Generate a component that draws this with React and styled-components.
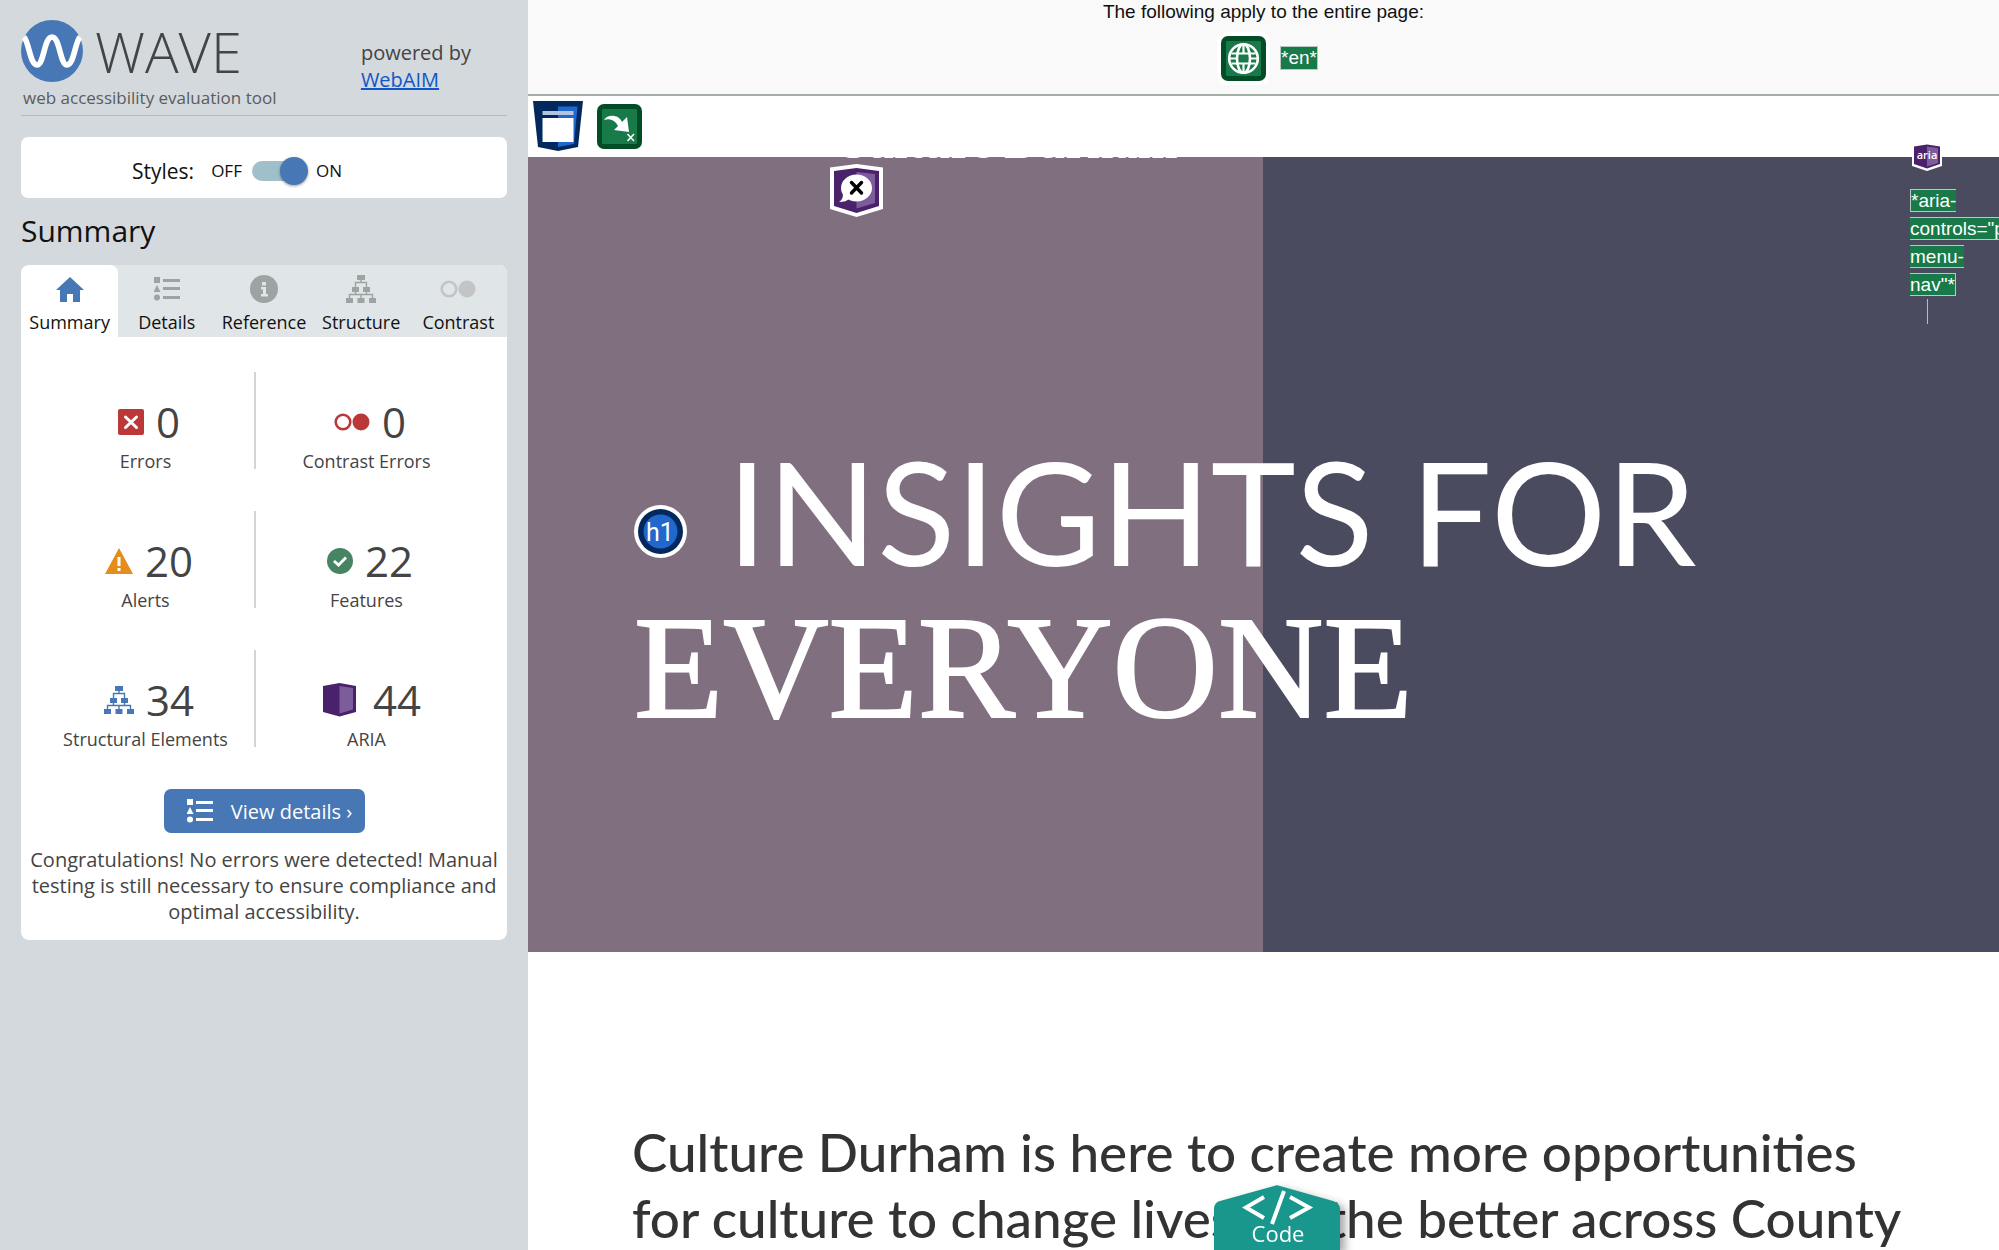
import React, { useState } from "react"
import styled, { createGlobalStyle } from "styled-components"

const GlobalStyle = createGlobalStyle`
  * {
    box-sizing: border-box;
  }
  body {
    margin: 0;
    font-family: "Open Sans", "Noto Sans", sans-serif;
    color: #444;
  }
  h1, h2, p {
    margin: 0;
    font-weight: 400;
  }
  svg {
    display: block;
    flex: none;
  }
  button {
    font-family: inherit;
    border: 0;
    padding: 0;
    cursor: pointer;
  }
`

const Page = styled.div`
  display: grid;
  grid-template-columns: 528px minmax(0, 1fr);
  height: 100vh;
  overflow: hidden;
`

/* sidebar */

const Sidebar = styled.aside`
  padding: 20px 21px;
  background: #d3d9dd;
`

const Brand = styled.header`
  display: flex;
  align-items: flex-start;
  justify-content: space-between;
  height: 96px;
  padding-right: 36px;
  border-bottom: 1px solid #b3b8bb;
`

const Logo = styled.div`
  display: flex;
  align-items: center;
  gap: 12px;
  height: 62px;
  font-size: 56px;
  font-weight: 300;
  line-height: 62px;
`

const Tagline = styled.p`
  padding-left: 2px;
  font-size: 17px;
  line-height: 32px;
  color: #5a5c5e;
`

const Powered = styled.p`
  padding-top: 19px;
  font-size: 20px;
  line-height: 27px;
  a {
    display: block;
    color: #0f57c9;
  }
`

const StylesCard = styled.div`
  display: flex;
  align-items: center;
  height: 61px;
  margin-top: 21px;
  padding: 6px 0 0 111px;
  border-radius: 7px;
  background: #fff;
  color: #111;
  font-size: 17px;
`

const StylesLabel = styled.span`
  margin-right: 17px;
  font-size: 21px;
`

const SwitchLabel = styled.label`
  display: flex;
  align-items: center;
  gap: 10px;
`

const Switch = styled.input`
  appearance: none;
  position: relative;
  width: 54px;
  height: 20px;
  margin: 0;
  border-radius: 10px;
  background: #9fc0cb;
  cursor: pointer;
  &::after {
    content: "";
    position: absolute;
    top: -4px;
    left: 0;
    width: 28px;
    height: 28px;
    border-radius: 50%;
    background: #4877b5;
    box-shadow: 0 1px 3px rgba(0, 0, 0, 0.4);
  }
  &:checked::after {
    left: 28px;
  }
`

const SectionTitle = styled.h2`
  margin-top: 12px;
  font-size: 30px;
  line-height: 42px;
  color: #111;
`

const Panel = styled.section`
  margin-top: 13px;
  padding-bottom: 15px;
  border-radius: 8px;
  background: #fff;
  overflow: hidden;
`

const Tabs = styled.div`
  display: grid;
  grid-template-columns: repeat(5, 1fr);
  background: #e0e5e7;
`

const Tab = styled.button`
  display: flex;
  flex-direction: column;
  align-items: center;
  height: 72px;
  padding-top: 5px;
  border-radius: 8px 8px 0 0;
  background: ${props => (props.$active ? "#fff" : "transparent")};
  color: #111;
  font-size: 18px;
  line-height: 28px;
`

const TabIcon = styled.span`
  display: flex;
  align-items: center;
  height: 38px;
  color: ${props => props.$color};
`

const Stats = styled.div`
  display: grid;
  grid-template-columns: repeat(2, 221px);
  row-gap: 42px;
  padding: 35px 0 42px 14px;
`

const Stat = styled.div`
  display: flex;
  flex-direction: column;
  align-items: center;
  height: 97px;
  padding: 23px 0 0 2px;
  border-right: 2px solid ${props => (props.$line ? "#d4d4d4" : "transparent")};
  font-size: 18px;
  line-height: 26px;
`

const Count = styled.div`
  display: flex;
  flex: none;
  align-items: center;
  gap: 12px;
  height: 53px;
  padding-left: 7px;
  font-size: 42px;
`

const DetailsButton = styled.button`
  display: flex;
  align-items: center;
  justify-content: center;
  gap: 18px;
  width: 201px;
  height: 44px;
  margin: 0 auto 14px;
  padding-left: 11px;
  border-radius: 7px;
  background: #4877b5;
  color: #fff;
  font-size: 20px;
`

const Message = styled.p`
  padding: 0 8px;
  font-size: 20px;
  line-height: 26px;
  text-align: center;
`

/* evaluated page */

const Main = styled.main`
  background: #fff;
  overflow: hidden;
`

const PageNote = styled.div`
  height: 96px;
  border-bottom: 2px solid #a5aea5;
  background: #f9f9f9;
  color: #111;
  font-family: "Liberation Sans", Arial, sans-serif;
  font-size: 19px;
  line-height: 24px;
  text-align: center;
`

const NoteIcons = styled.div`
  display: flex;
  align-items: center;
  justify-content: center;
  gap: 10px;
  height: 68px;
  padding-left: 8px;
`

const Attribute = styled.span`
  border: 1px solid #b9c9bf;
  background: #177a48;
  color: #fff;
  font-family: "Liberation Sans", Arial, sans-serif;
  font-size: 19px;
  line-height: 22px;
`

const TopStrip = styled.div`
  display: flex;
  align-items: center;
  gap: 14px;
  height: 61px;
  padding: 0 5px 1px;
`

const Hero = styled.section`
  position: relative;
  height: 795px;
  padding: 279px 0 0 106px;
  background: linear-gradient(90deg, #80707f 50%, #4b4b60 50%);
  color: #fff;
`

const SiteName = styled.a`
  position: absolute;
  top: -41px;
  left: 305px;
  color: #fff;
  font: bold 48px/52px "Liberation Serif", "Times New Roman", serif;
  text-decoration: none;
  white-space: nowrap;
`

const HiddenBadge = styled.span`
  position: absolute;
  top: 7px;
  left: 302px;
`

const MenuNote = styled.div`
  position: absolute;
  top: -14px;
  right: 0;
  width: 89px;
  line-height: 28px;
`

const AriaBadge = styled.div`
  margin-left: 2px;
`

const MenuAttribute = styled.div`
  margin-top: 16px;
`

const MenuBar = styled.div`
  width: 1px;
  height: 25px;
  margin-left: 17px;
  background: #bbb;
`

const Title = styled.h1`
  display: flex;
  flex-direction: column;
  white-space: nowrap;
`

const TitleLine = styled.span`
  display: flex;
  align-items: center;
  gap: 40px;
  height: 150px;
  font-family: Lato, sans-serif;
  font-size: 144px;
  line-height: 150px;
`

const HeadingMark = styled.span`
  padding-top: 40px;
`

const TitleSerif = styled.span`
  font-family: "Liberation Serif", "Times New Roman", serif;
  font-size: 146px;
  line-height: 164px;
  -webkit-text-stroke: 2px #fff;
`

const Intro = styled.p`
  padding: 167px 80px 0 104px;
  color: #333;
  font-family: Lato, sans-serif;
  font-size: 53px;
  font-weight: 500;
  line-height: 66px;
`

const CodeTab = styled.button`
  position: fixed;
  bottom: 0;
  left: 1214px;
  width: 126px;
  height: 65px;
  background: none;
  filter: drop-shadow(5px 4px 4px rgba(0, 0, 0, 0.35));
  color: #fff;
`

const WaveMark = () => (
  <svg width="62" height="62" viewBox="0 0 62 62">
    <circle cx="31" cy="31" r="31" fill="#4877b5" />
    <path d="M3 17C8 22 9 45 16 45S23 17 31 17s8 28 15 28S54 22 59 17" fill="none" stroke="#fff" strokeWidth="5.6" />
  </svg>
)

const HomeIcon = () => (
  <svg width="28" height="25" viewBox="0 0 28 25" fill="currentColor">
    <path d="M14 0L28 13h-4v12h-7v-8h-6v8H4V13H0z" />
  </svg>
)

const ListIcon = () => (
  <svg width="26" height="24" viewBox="0 0 26 24" fill="currentColor">
    <path d="M0 0h6v6H0zM3 8l3.5 7h-7zM9 2h17v3H9zM9 10h17v3H9zM9 19h17v3H9z" />
    <circle cx="3" cy="20.5" r="3" />
  </svg>
)

const InfoIcon = () => (
  <svg width="28" height="28" viewBox="0 0 28 28">
    <circle cx="14" cy="14" r="14" fill="currentColor" />
    <path d="M12 7h4v3.500h-4zM11 12h5v7h2v2.500h-7V19h2v-4.500h-2z" fill="#e0e5e7" />
  </svg>
)

const TreeIcon = () => (
  <svg width="30" height="28" viewBox="0 0 30 28" fill="currentColor">
    <path d="M11 0h8v5h-8zM6 12h7v5H6zM17 12h7v5h-7zM0 23h7v5H0zM11.500 23h7v5h-7zM23 23h7v5h-7z" />
    <path d="M15 4v4M9.500 13V7.500h11V13M9.500 16v4M20.500 16v4M3.500 24v-4.500h23V24M15 19v5" fill="none" stroke="currentColor" strokeWidth="1.4" />
  </svg>
)

const ContrastIcon = () => (
  <svg width="36" height="18" viewBox="0 0 36 18">
    <circle cx="9" cy="9" r="7.300" fill="none" stroke="currentColor" strokeWidth="2.600" />
    <circle cx="27" cy="9" r="8.500" fill="currentColor" />
  </svg>
)

const ErrorIcon = () => (
  <svg width="26" height="26" viewBox="0 0 26 26">
    <rect width="26" height="26" rx="2" fill="#bb3839" />
    <path d="M7.500 8l11 10.500M18.500 8l-11 10.500" stroke="#fff" strokeWidth="3" strokeLinecap="round" />
  </svg>
)

const AlertIcon = () => (
  <svg width="28" height="26" viewBox="0 0 28 26">
    <path d="M14 0l14 26H0z" fill="#e48d1b" />
    <path d="M12.500 9h3v9h-3zM12.500 20h3v3h-3z" fill="#fff" />
  </svg>
)

const FeatureIcon = () => (
  <svg width="26" height="26" viewBox="0 0 26 26">
    <circle cx="13" cy="13" r="13" fill="#478464" />
    <path d="M7 13l4.500 4L19 9.500" fill="none" stroke="#fff" strokeWidth="2.800" />
  </svg>
)

const AriaIcon = () => (
  <svg width="42" height="34" viewBox="-4 0 42 34">
    <path d="M0 3L16.500 0 33 3v26l-16.500 4.500L0 29z" fill="#4a216b" />
    <path d="M16.500 3L30 5v21.500l-13.500 4z" fill="#7c5c9b" />
  </svg>
)

const GlobeBadge = () => (
  <svg width="53" height="53" viewBox="0 0 53 53">
    <rect width="53" height="53" rx="9" fill="#fff" />
    <rect x="4" y="4" width="45" height="45" rx="7" fill="#034d26" />
    <rect x="9" y="9" width="35" height="35" rx="1" fill="#177a48" />
    <g fill="none" stroke="#fff" strokeWidth="2.600">
      <circle cx="26.500" cy="26.500" r="14.300" />
      <ellipse cx="26.500" cy="26.500" rx="6.500" ry="14.300" />
      <path d="M14.500 21.500h24M14.500 31.500h24M26.500 12v9.500M26.500 31.500V41M12 26.500h8M33 26.500h8" strokeWidth="2.200" />
    </g>
  </svg>
)

const HeaderBadge = () => (
  <svg width="50" height="50" viewBox="0 0 50 50">
    <path d="M0 0h50l-5 46-20 4-20-4z" fill="#03285d" />
    <path d="M25 5.500h19.500L41 43l-16 3z" fill="#2068cc" />
    <path d="M9.500 10h31v4h-31z" fill="#b3c4de" />
    <path d="M9.500 17h31v24h-31z" fill="#fff" />
  </svg>
)

const SkipBadge = () => (
  <svg width="45" height="45" viewBox="0 0 45 45">
    <rect width="45" height="45" rx="7" fill="#034d26" />
    <rect x="5" y="5" width="35" height="35" rx="1" fill="#177a48" />
    <path d="M7 16c3-6 15-6 18 2l5-5 2 15-15-2 4-4c-3-6-8-8-14-6z" fill="#fff" />
    <path d="M30.500 30l6.500 7M37 30l-6.500 7" stroke="#fff" strokeWidth="1.600" />
  </svg>
)

const SpeechBadge = () => (
  <svg width="53" height="53" viewBox="0 0 53 53">
    <path d="M0 3.500L26.500 0 53 3.500V45l-26.500 8L0 45z" fill="#fff" />
    <path d="M4 7l22.500-3L49 7v35l-22.500 7L4 42z" fill="#4a216b" />
    <path d="M26.500 8L45 10v29l-18.500 5.500z" fill="#7c5c9b" />
    <ellipse cx="26.500" cy="24" rx="15.500" ry="13.500" fill="#fff" />
    <path d="M13 29c0 5-1 7-4 9 5 0 8-1 11-4z" fill="#fff" />
    <path d="M21.500 18.500l10 10.500M31.500 18.500l-10 10.500" stroke="#000" strokeWidth="3.400" strokeLinecap="round" />
  </svg>
)

const AriaTextBadge = () => (
  <svg width="30" height="28" viewBox="0 0 30 28">
    <path d="M0 2L15 0l15 2v21l-15 5L0 23z" fill="#fff" />
    <path d="M2 3.500L15 1.500 28 3.500V21l-13 4.500L2 21z" fill="#4a216b" />
    <path d="M15 3.500L26 5v15l-11 3.500z" fill="#7c5c9b" />
    <text x="15" y="16" fill="#fff" fontFamily="Open Sans, sans-serif" fontSize="11" fontWeight="600" textAnchor="middle">aria</text>
  </svg>
)

const HeadingBadge = () => (
  <svg width="53" height="53" viewBox="0 0 53 53">
    <circle cx="26.500" cy="26.500" r="26.500" fill="#fff" />
    <circle cx="26.500" cy="26.500" r="22.500" fill="#03285d" />
    <circle cx="26.500" cy="26.500" r="17" fill="#2068cc" />
    <text x="26" y="36" fill="#fff" fontFamily="Roboto, sans-serif" fontSize="25" textAnchor="middle">h1</text>
  </svg>
)

const CodeShape = () => (
  <svg width="126" height="65" viewBox="0 0 126 65">
    <path d="M0 65V24c0-4 2-7 6-8L60 1c2-1 4-1 6 0l53 15c5 2 7 4 7 8v41z" fill="#19978d" />
    <g fill="none" stroke="#fff" strokeWidth="4">
      <path d="M50 12L32 22.500 50 33M76 12l19 10.500L76 33M70 6L58 39" />
    </g>
    <text x="64" y="57" fill="#fff" fontFamily="Open Sans, sans-serif" fontSize="22" textAnchor="middle">Code</text>
  </svg>
)

const tabs = [
  { name: "Summary", icon: <HomeIcon />, color: "#4877b5" },
  { name: "Details", icon: <ListIcon />, color: "#9da2a2" },
  { name: "Reference", icon: <InfoIcon />, color: "#9da2a2" },
  { name: "Structure", icon: <TreeIcon />, color: "#9da2a2" },
  { name: "Contrast", icon: <ContrastIcon />, color: "#c2c4c5" },
]

const stats = [
  { name: "Errors", count: 0, icon: <ErrorIcon /> },
  { name: "Contrast Errors", count: 0, icon: <ContrastIcon />, color: "#bb3839" },
  { name: "Alerts", count: 20, icon: <AlertIcon /> },
  { name: "Features", count: 22, icon: <FeatureIcon /> },
  { name: "Structural Elements", count: 34, icon: <TreeIcon />, color: "#4877b5" },
  { name: "ARIA", count: 44, icon: <AriaIcon /> },
]

const App = () => {
  const [stylesOn, setStylesOn] = useState(true)
  const [active, setActive] = useState("Summary")

  return (
    <Page>
      <GlobalStyle />
      <Sidebar>
        <Brand>
          <div>
            <Logo>
              <WaveMark />
              <span>WAVE</span>
            </Logo>
            <Tagline>web accessibility evaluation tool</Tagline>
          </div>
          <Powered>
            powered by <a href="#webaim">WebAIM</a>
          </Powered>
        </Brand>

        <StylesCard>
          <StylesLabel>Styles:</StylesLabel>
          <SwitchLabel>
            OFF
            <Switch
              type="checkbox"
              role="switch"
              checked={stylesOn}
              onChange={e => setStylesOn(e.target.checked)}
            />
            ON
          </SwitchLabel>
        </StylesCard>

        <SectionTitle>Summary</SectionTitle>
        <Panel>
          <Tabs role="tablist">
            {tabs.map(tab => (
              <Tab
                key={tab.name}
                role="tab"
                aria-selected={active === tab.name}
                $active={active === tab.name}
                onClick={() => setActive(tab.name)}
              >
                <TabIcon $color={tab.color}>{tab.icon}</TabIcon>
                {tab.name}
              </Tab>
            ))}
          </Tabs>
          <Stats>
            {stats.map((stat, i) => (
              <Stat key={stat.name} $line={i % 2 === 0}>
                <Count>
                  <TabIcon $color={stat.color}>{stat.icon}</TabIcon>
                  {stat.count}
                </Count>
                {stat.name}
              </Stat>
            ))}
          </Stats>
          <DetailsButton>
            <ListIcon />
            View details ›
          </DetailsButton>
          <Message>
            Congratulations! No errors were detected! Manual testing is still
            necessary to ensure compliance and optimal accessibility.
          </Message>
        </Panel>
      </Sidebar>

      <Main>
        <PageNote>
          <p>The following apply to the entire page:</p>
          <NoteIcons>
            <GlobeBadge />
            <Attribute>*en*</Attribute>
          </NoteIcons>
        </PageNote>
        <TopStrip>
          <HeaderBadge />
          <SkipBadge />
        </TopStrip>
        <Hero>
          <SiteName href="#home">Culture Durham</SiteName>
          <HiddenBadge>
            <SpeechBadge />
          </HiddenBadge>
          <MenuNote>
            <AriaBadge>
              <AriaTextBadge />
            </AriaBadge>
            <MenuAttribute>
              <Attribute>*aria-controls="primary-menu-nav"*</Attribute>
            </MenuAttribute>
            <MenuBar />
          </MenuNote>
          <Title>
            <TitleLine>
              <HeadingMark>
                <HeadingBadge />
              </HeadingMark>
              INSIGHTS FOR
            </TitleLine>
            <TitleSerif>EVERYONE</TitleSerif>
          </Title>
        </Hero>
        <Intro>
          Culture Durham is here to create more opportunities for culture to
          change lives for the better across County Durham.
        </Intro>
      </Main>

      <CodeTab>
        <CodeShape />
      </CodeTab>
    </Page>
  )
}

export default App
